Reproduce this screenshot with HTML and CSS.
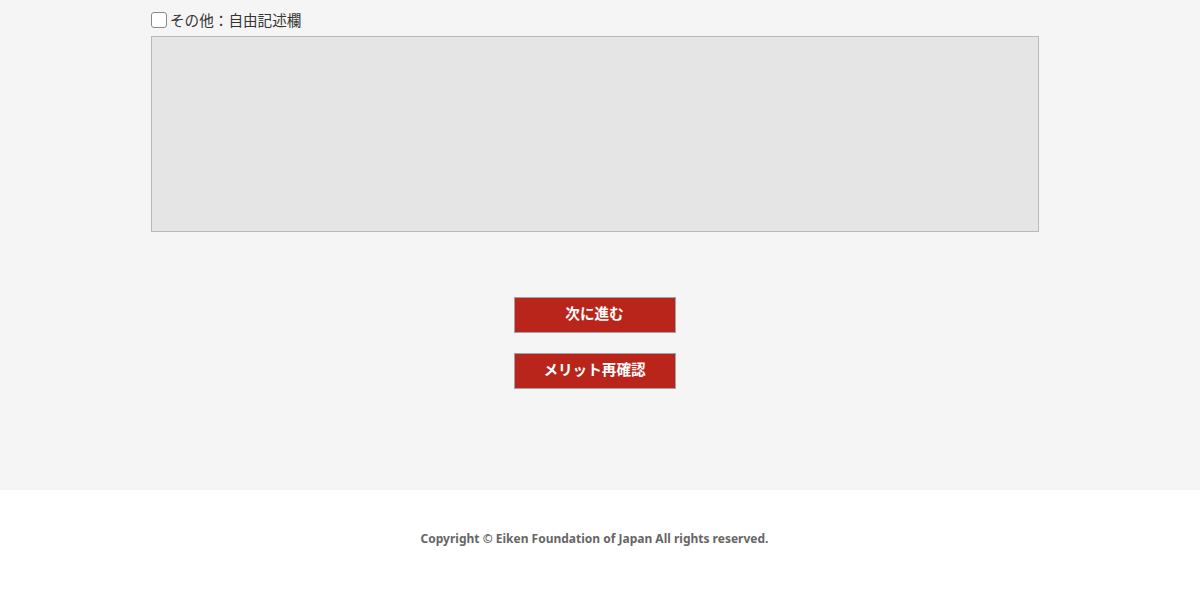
FILE: index.html
```html
<!DOCTYPE html>
<html lang="ja">
<head>
<meta charset="utf-8">
<title>アンケート</title>
<link rel="stylesheet" href="styles.css">
</head>
<body>
<main class="main">
  <div class="container">
    <label class="check-label">
      <span class="checkbox"></span>
      <span class="check-text">その他：自由記述欄</span>
    </label>
    <textarea class="free-text"></textarea>
    <div class="actions">
      <button class="btn" type="button">次に進む</button>
      <button class="btn" type="button">メリット再確認</button>
    </div>
  </div>
</main>
<footer class="footer">
  <div class="container">
    <p class="copyright">Copyright © Eiken Foundation of Japan All rights reserved.</p>
  </div>
</footer>
</body>
</html>
```

FILE: styles.css
```css
* { box-sizing: border-box; }
html, body { margin: 0; padding: 0; }
body {
  background: #ffffff;
  font-family: "Noto Sans CJK JP", "DejaVu Sans", sans-serif;
  color: #333;
}
.main {
  background: #f5f5f5;
  height: 490px;
  padding-top: 9px;
}
.container {
  width: 887px;
  margin-left: calc(50% - 449px);
}
.check-label {
  display: flex;
  align-items: center;
  gap: 3px;
  height: 22px;
}
.checkbox {
  width: 16px;
  height: 16px;
  border: 1px solid #8a8a8a;
  border-radius: 3px;
  background: #fff;
  flex: none;
}
.check-text {
  font-size: 14.6px;
  line-height: 22px;
  color: #333;
}
.free-text {
  display: block;
  margin-top: 5px;
  width: 888px;
  height: 196px;
  background: #e5e5e5;
  border: 1px solid #b9b9b9;
  resize: none;
}
.actions {
  display: flex;
  flex-direction: column;
  align-items: center;
  gap: 20px;
  margin-top: 65px;
}
.btn {
  width: 162px;
  height: 36px;
  background: #b9251a;
  border: 1px solid #a3a3a3;
  color: #fff;
  font-family: "Noto Sans CJK JP", sans-serif;
  font-weight: bold;
  font-size: 14.6px;
  line-height: 1;
  padding: 0 0 3px;
  cursor: pointer;
}
.footer {
  background: #fff;
  height: 108px;
  padding-top: 40px;
}
.copyright {
  margin: 0;
  text-align: center;
  font-family: "Noto Sans", "DejaVu Sans", sans-serif;
  font-weight: bold;
  font-size: 12px;
  color: #666;
}
```
